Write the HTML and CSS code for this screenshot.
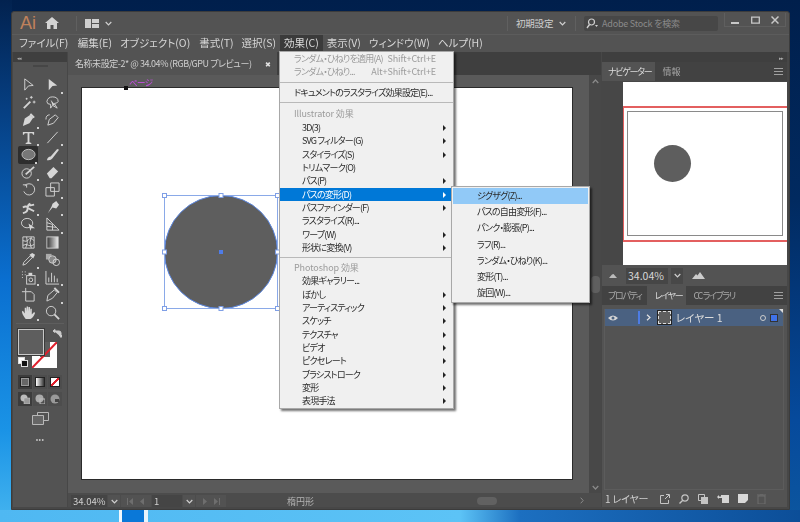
FILE: index.html
```html
<!DOCTYPE html>
<html lang="ja">
<head>
    <meta charset="UTF-8">
    <meta name="viewport" content="width=device-width, initial-scale=1.0">
    <title>Adobe Illustrator - 効果メニュー</title>
    <link rel="stylesheet" href="styles.css">
</head>
<body>

<div class="window">

    <!-- Title bar -->
    <div class="titlebar">
        <span class="ai-logo">Ai</span>
        <svg class="home-icon" width="14" height="12" viewBox="0 0 14 12"><path d="M7 0 L14 6 H12 V12 H8.5 V8 H5.5 V12 H2 V6 H0 Z" fill="#d4d4d4"/></svg>
        <span class="title-sep"></span>
        <svg width="14" height="9" viewBox="0 0 14 9"><path d="M0 0h6v9H0zM7 0h7v4H7zM7 5h7v4H7z" fill="#cfcfcf"/></svg>
        <svg class="chev" width="7" height="5" viewBox="0 0 7 5"><path d="M.7 1 L3.5 3.8 L6.3 1" fill="none" stroke="#d0d0d0" stroke-width="1.2"/></svg>
        <span class="title-space"></span>
        <span class="title-sep"></span>
        <span class="workspace-name">初期設定</span>
        <svg class="chev" width="7" height="5" viewBox="0 0 7 5"><path d="M.7 1 L3.5 3.8 L6.3 1" fill="none" stroke="#d0d0d0" stroke-width="1.2"/></svg>
        <span class="title-sep"></span>
        <div class="stock-search">
            <svg width="12" height="11" viewBox="0 0 12 11"><circle cx="5.5" cy="4" r="3" fill="none" stroke="#cfcfcf" stroke-width="1.2"/><path d="M3.5 6.5 L1 10" stroke="#cfcfcf" stroke-width="1.4"/><path d="M9 7h3l-1.500 2z" fill="#cfcfcf"/></svg>
            <span>Adobe Stock を検索</span>
        </div>
        <div class="win-buttons">
            <span class="win-btn"><svg width="8" height="8" viewBox="0 0 8 8"><path d="M0 6h8v2H0z" fill="#c8c8c8"/></svg></span>
            <span class="win-btn"><svg width="9" height="8" viewBox="0 0 9 8"><path d="M.7 1.200h7.600v6H.7z" fill="none" stroke="#c8c8c8" stroke-width="1.300"/></svg></span>
            <span class="win-btn"><svg width="8" height="8" viewBox="0 0 8 8"><path d="M.5.500 L7.500 7.500 M7.500.500 L.5 7.500" stroke="#c8c8c8" stroke-width="1.500"/></svg></span>
        </div>
    </div>

    <!-- Menu bar -->
    <div class="menubar">
        <span class="menubar-item">ファイル(F)</span>
        <span class="menubar-item">編集(E)</span>
        <span class="menubar-item">オブジェクト(O)</span>
        <span class="menubar-item">書式(T)</span>
        <span class="menubar-item">選択(S)</span>
        <span class="menubar-item active">効果(C)</span>
        <span class="menubar-item">表示(V)</span>
        <span class="menubar-item">ウィンドウ(W)</span>
        <span class="menubar-item">ヘルプ(H)</span>
    </div>

    <div class="workspace">

        <!-- Tools -->
        <div class="toolbar">
            <div class="strip"><span class="strip-arrows">◂◂</span></div>
            <div class="grip"></div>
            <div class="tool-grid">
                <span class="tool"><svg viewBox="0 0 16 16"><path d="M4 2 L13 9 L8 9.500 L4 14 Z" class="ln"/></svg></span>
                <span class="tool more"><svg viewBox="0 0 16 16"><path d="M4 2 L13 9 L8 9.500 L4 14 Z" class="fl"/></svg></span>
                <span class="tool"><svg viewBox="0 0 16 16"><path d="M3 14 L10 7" class="ln w2"/><path d="M11 1v3M9.500 2.500h3M14 6v3M12.500 7.500h3M6 3v2M5 4h2" class="ln"/></svg></span>
                <span class="tool"><svg viewBox="0 0 16 16"><path d="M2 7 Q3 2 8 2 Q14 2 14 7 Q13 9 10 9 L13 14 L8 11 L6 14 L6 10 Q2 10 2 7Z" class="ln"/><path d="M6 5 L11 11 L8 11 Z" class="fl"/></svg></span>
                <span class="tool more"><svg viewBox="0 0 16 16"><path d="M2 15 L4 7 L10 3 L13 6 L9 12 Z" class="fl"/><path d="M10 2 L14 6" class="ln w2"/></svg></span>
                <span class="tool"><svg viewBox="0 0 16 16"><path d="M3 14 L4.500 8 L11 3 L14 6 L9 12 Z" class="ln"/><path d="M1 8 Q1 3 5 3" class="ln"/></svg></span>
                <span class="tool more"><svg viewBox="0 0 16 16"><path d="M2 2h12v3h-1l-1-1.500H9V13l2 .8V15H5v-1.200l2-.8V3.500H4L3 5H2z" class="fl"/></svg></span>
                <span class="tool more"><svg viewBox="0 0 16 16"><path d="M2.500 14 L13.500 2" class="ln"/></svg></span>
                <span class="tool selected more"><svg viewBox="0 0 16 16"><ellipse cx="8" cy="8" rx="7" ry="5.500" fill="#777" stroke="#bdbdbd"/></svg></span>
                <span class="tool more"><svg viewBox="0 0 16 16"><path d="M2 14 Q3 10 6 10 L13 2 L15 3 L8 12 Q6 15 2 14Z" class="fl"/></svg></span>
                <span class="tool more"><svg viewBox="0 0 16 16"><ellipse cx="6" cy="9" rx="5" ry="5" class="ln"/><path d="M5 10 L14 2" class="ln w2"/></svg></span>
                <span class="tool more"><svg viewBox="0 0 16 16"><path d="M2 9 L9 2 L14 7 L7 14 H5 Z" class="fl"/></svg></span>
                <span class="tool"><svg viewBox="0 0 16 16"><path d="M4 4 A6 6 0 1 1 3 10" class="ln"/><path d="M2 3h4v3" class="ln"/></svg></span>
                <span class="tool more"><svg viewBox="0 0 16 16"><path d="M1 6h9v9H1z M6 1h9v9H6z" class="ln"/></svg></span>
                <span class="tool more"><svg viewBox="0 0 16 16"><path d="M2 14 Q7 13 7 9 Q7 5 10 4 M2 8 Q5 6 8 8 M8 9 L14 12 M9 6 L14 5" class="ln w2"/></svg></span>
                <span class="tool more"><svg viewBox="0 0 16 16"><path d="M8 4 L12 1 L15 5 L12 9 L8 8 L3 14 L7 7 Z" class="fl"/></svg></span>
                <span class="tool"><svg viewBox="0 0 16 16"><ellipse cx="6.500" cy="6.500" rx="6" ry="5" class="ln"/><path d="M8 7 L15 12 L11 12 L10 15 Z" class="fl"/></svg></span>
                <span class="tool more"><svg viewBox="0 0 16 16"><path d="M2 1v13h13 L2 1 M2 6 L8 8 V14 M2 10 L12 11" class="ln"/></svg></span>
                <span class="tool"><svg viewBox="0 0 16 16"><path d="M2 2h12v12H2z M2 6 Q6 8 8 5 Q10 2 14 6 M2 11 Q6 9 8 11 Q10 13 14 10 M6 2 Q8 8 5 14 M11 2 Q8 8 11 14" class="ln"/></svg></span>
                <span class="tool"><svg viewBox="0 0 16 16"><defs><linearGradient id="toolgrad"><stop offset="0" stop-color="#333"/><stop offset="1" stop-color="#eee"/></linearGradient></defs><rect x="2" y="2" width="12" height="12" fill="url(#toolgrad)" stroke="#ccc"/></svg></span>
                <span class="tool more"><svg viewBox="0 0 16 16"><path d="M2 14 L3 11 L10 4 L12 6 L5 13 Z" class="ln"/><path d="M9 3 L12 1 L15 3 L13 7 Z" class="fl"/></svg></span>
                <span class="tool"><svg viewBox="0 0 16 16"><rect x="1" y="2" width="6" height="6" fill="#aaa"/><circle cx="8" cy="8" r="4" fill="#888" stroke="#ccc"/><circle cx="12" cy="11" r="3.500" class="ln"/></svg></span>
                <span class="tool more"><svg viewBox="0 0 16 16"><path d="M1 2h1M4 2h1M1 5h1M4 5h1M1 8h1" class="ln"/><rect x="6" y="6" width="9" height="9" class="ln"/><rect x="8" y="3" width="4" height="3" class="fl"/><circle cx="10.500" cy="10.500" r="2" class="ln"/></svg></span>
                <span class="tool more"><svg viewBox="0 0 16 16"><path d="M1 1v14h14M4 13V8M7 13V3M10 13V6M13 13V9" class="ln"/></svg></span>
                <span class="tool"><svg viewBox="0 0 16 16"><path d="M5 1v4M1 5h4 M5 5 H11 L14 8 V15 H5 Z" class="ln"/></svg></span>
                <span class="tool more"><svg viewBox="0 0 16 16"><path d="M2 15 L3 9 L10 3 L13 6 L8 12 Z" class="ln"/><path d="M10 1 L15 6" class="ln w2"/></svg></span>
                <span class="tool more"><svg viewBox="0 0 16 16"><path d="M5 15 Q1 10 1 7 L2 6 L4 9 V3 L5.500 3 L6 7 V1.500 H7.500 L8 7 V2 H9.500 L10 8 V4 H11.500 V10 L14 7.500 L15 8.500 Q13 14 10 15 Z" class="fl"/></svg></span>
                <span class="tool"><svg viewBox="0 0 16 16"><circle cx="6.500" cy="6.500" r="5" class="ln"/><path d="M10 10 L15 15" class="ln w2"/></svg></span>
            </div>
            <div class="tool-rule"></div>

            <div class="color-well">
                <svg class="stroke-box" width="25" height="26" viewBox="0 0 25 26"><rect width="25" height="26" fill="#fff"/><rect x="8" width="10" height="15" fill="#5e5e5e"/><path d="M0 26 L25 0" stroke="#e0202c" stroke-width="2"/></svg>
                <div class="fill-box"></div>
                <svg class="swap-arrow" width="9" height="9" viewBox="0 0 9 9"><path d="M1 2 H6 Q8 2 8 4 V8 M0 2 L2 0.500 V3.500Z M6.500 6.500 L9 6.500 L8 8.500Z" fill="#ccc" stroke="#ccc"/></svg>
                <div class="mini-default"><span class="mini-back"></span><span class="mini-front"></span></div>
            </div>

            <div class="tool-row">
                <span class="mode-btn on"><span class="swatch-flat"></span></span>
                <span class="mode-btn"><span class="swatch-grad"></span></span>
                <span class="mode-btn"><span class="swatch-none"></span></span>
            </div>
            <div class="tool-row draw-row">
                <span class="mode-btn on"><svg width="10" height="10" viewBox="0 0 10 10"><circle cx="4" cy="4" r="3.500" fill="#bbb"/><rect x="4" y="4" width="6" height="6" fill="#999" stroke="#ccc" stroke-width=".5"/></svg></span>
                <span class="mode-btn"><svg width="10" height="10" viewBox="0 0 10 10"><circle cx="4.500" cy="4.500" r="4" fill="#aaa"/><rect x="5" y="5" width="5" height="5" fill="none" stroke="#bbb"/></svg></span>
                <span class="mode-btn"><svg width="10" height="10" viewBox="0 0 10 10"><circle cx="5" cy="5" r="4.500" fill="#999"/><path d="M5 5h4v3H5z" fill="#444"/></svg></span>
            </div>
            <div class="screen-mode">
                <svg width="17" height="13" viewBox="0 0 17 13"><path d="M5.500 3.500V.500h11v8h-5" fill="none" stroke="#b8b8b8"/><path d="M.5 3.500h11v9H.5z" fill="#666" stroke="#b8b8b8"/></svg>
            </div>
            <div class="more-tools">•••</div>
        </div>

        <!-- Document -->
        <div class="document">
            <div class="doc-tabs">
                <div class="doc-tab">
                    <span>名称未設定-2* @ 34.04% (RGB/GPU プレビュー)</span>
                    <span class="doc-close">✖</span>
                </div>
            </div>
            <div class="doc-body">
                <div class="canvas">
                    <div class="artboard">
                        <span class="page-label">ページ</span>
                        <span class="page-mark"></span>
                        <svg class="selection" width="124" height="124" viewBox="0 0 124 124">
                            <circle cx="62" cy="62" r="56.500" fill="#5e5e5e" stroke="#5c87df"/>
                            <rect x="5.500" y="5.500" width="113" height="113" fill="none" stroke="#8aa9e8"/>
                            <g fill="#fff" stroke="#7f9fe6">
                                <rect x="3.500" y="3.500" width="4" height="4"/>
                                <rect x="60" y="3.500" width="4" height="4"/>
                                <rect x="116.500" y="3.500" width="4" height="4"/>
                                <rect x="3.500" y="60" width="4" height="4"/>
                                <rect x="116.500" y="60" width="4" height="4"/>
                                <rect x="3.500" y="116.500" width="4" height="4"/>
                                <rect x="60" y="116.500" width="4" height="4"/>
                                <rect x="116.500" y="116.500" width="4" height="4"/>
                            </g>
                            <rect x="60" y="60" width="4" height="4" fill="#4f7ce8"/>
                        </svg>
                    </div>
                </div>
                <div class="v-scroll">
                    <svg width="7" height="5" viewBox="0 0 7 5"><path d="M.7 4 L3.500 1 L6.300 4" fill="none" stroke="#8a8a8a" stroke-width="1.200"/></svg>
                    <span class="v-thumb"></span>
                    <svg width="7" height="5" viewBox="0 0 7 5"><path d="M.7 1 L3.500 4 L6.300 1" fill="none" stroke="#8a8a8a" stroke-width="1.200"/></svg>
                </div>
            </div>
            <div class="statusbar">
                <span class="status-field zoom-field">34.04%</span>
                <span class="status-btn"><svg width="7" height="5" viewBox="0 0 7 5"><path d="M.7 1 L3.500 3.800 L6.300 1" fill="none" stroke="#d0d0d0" stroke-width="1.200"/></svg></span>
                <span class="status-btn wide"><svg width="18" height="7" viewBox="0 0 18 7"><path d="M0 0h1v7H0zM6 0v7L2 3.500zM17 0v7L13 3.500z" fill="#6e6e6e"/></svg></span>
                <span class="status-field page-field">1</span>
                <span class="status-btn"><svg width="7" height="5" viewBox="0 0 7 5"><path d="M.7 1 L3.500 3.800 L6.300 1" fill="none" stroke="#d0d0d0" stroke-width="1.200"/></svg></span>
                <span class="status-btn wide"><svg width="18" height="7" viewBox="0 0 18 7"><path d="M1 0v7L5 3.500zM12 0v7L16 3.500zM17 0h1v7h-1z" fill="#6e6e6e"/></svg></span>
                <span class="status-label">楕円形</span>
                <span class="h-thumb"></span>
                <svg class="status-arrow" width="4" height="7" viewBox="0 0 4 7"><path d="M.7 .7 L3.200 3.500 L.7 6.300" fill="none" stroke="#8a8a8a"/></svg>
            </div>
        </div>

        <!-- Right panels -->
        <div class="panels">
            <div class="strip strip-right"><span class="strip-arrows">▸▸</span></div>

            <div class="panel-tabs top-tabs">
                <span class="panel-tab active">ナビゲーター</span>
                <span class="panel-tab">情報</span>
                <span class="panel-menu"></span>
            </div>
            <div class="navigator">
                <div class="nav-view">
                    <div class="nav-red">
                        <div class="nav-page"><span class="nav-circle"></span></div>
                    </div>
                </div>
            </div>
            <div class="nav-zoom">
                <svg width="8" height="5" viewBox="0 0 8 5"><path d="M0 5 L3 1.500 L4.500 1 L8 5Z" fill="#bbb"/></svg>
                <span class="nav-field">34.04%</span>
                <span class="nav-chev"><svg width="7" height="5" viewBox="0 0 7 5"><path d="M.7 1 L3.500 3.800 L6.300 1" fill="none" stroke="#d0d0d0" stroke-width="1.200"/></svg></span>
                <svg width="13" height="7" viewBox="0 0 13 7"><path d="M0 7 L4 2 L5.500 3.500 L8 0 L13 7Z" fill="#ccc"/></svg>
            </div>

            <div class="panel-tabs layer-tabs">
                <span class="panel-tab">プロパティ</span>
                <span class="panel-tab active">レイヤー</span>
                <span class="panel-tab">CC ライブラリ</span>
                <span class="panel-menu"></span>
            </div>
            <div class="layers">
                <div class="layer-row">
                    <svg class="eye" width="10" height="6" viewBox="0 0 10 6"><path d="M0 3 Q5 -2 10 3 Q5 8 0 3Z" fill="#d6d6d6"/><circle cx="5" cy="3" r="1.500" fill="#4a6281"/></svg>
                    <span class="layer-color"></span>
                    <svg class="layer-chev" width="5" height="7" viewBox="0 0 5 7"><path d="M1 .7 L4 3.500 L1 6.300" fill="none" stroke="#e2e2e2" stroke-width="1.200"/></svg>
                    <span class="layer-thumb"></span>
                    <span class="layer-name">レイヤー 1</span>
                    <span class="layer-target"></span>
                    <span class="layer-sel"></span>
                </div>
            </div>
            <div class="panel-foot">
                <span class="foot-count">1 レイヤー</span>
                <svg width="10" height="10" viewBox="0 0 10 10"><path d="M4 1.500H.5v8h8V6M5 5 L9 1M6 .5h3.500V4" fill="none" stroke="#c4c4c4"/></svg>
                <svg width="10" height="10" viewBox="0 0 10 10"><circle cx="6" cy="4" r="3.200" fill="none" stroke="#c4c4c4" stroke-width="1.200"/><path d="M3.800 6.200 L.5 9.500" stroke="#c4c4c4" stroke-width="1.400"/></svg>
                <svg width="10" height="10" viewBox="0 0 10 10"><path d="M.5.500h6v6h-6z" fill="none" stroke="#c4c4c4"/><path d="M3 3h7v7H3z" fill="#c4c4c4"/></svg>
                <svg width="12" height="8" viewBox="0 0 12 8"><path d="M0 2 L2 0 V1.500 H4 V0 H12 V8 H5 V3 H2 V4Z" fill="#d4d4d4"/></svg>
                <svg width="10" height="9" viewBox="0 0 10 9"><path d="M0 0h10v6L7 9H0z" fill="#d8d8d8"/></svg>
                <svg class="trash" width="9" height="10" viewBox="0 0 9 10"><path d="M1 2h7v8H1zM0 1h9M3 0h3" fill="none" stroke="#6e6e6e"/></svg>
            </div>
        </div>
    </div>
</div>

<!-- Effect menu -->
<div class="menu effect-menu">
    <div class="row flush off"><span>ランダム・ひねりを適用(A)</span><span class="key">Shift+Ctrl+E</span></div>
    <div class="row flush off"><span>ランダム・ひねり...</span><span class="key">Alt+Shift+Ctrl+E</span></div>
    <div class="sep"></div>
    <div class="row flush"><span>ドキュメントのラスタライズ効果設定(E)...</span></div>
    <div class="sep"></div>
    <div class="row flush off head first-head"><span>Illustrator 効果</span></div>
    <div class="row sub"><span>3D(3)</span></div>
    <div class="row sub"><span>SVG フィルター(G)</span></div>
    <div class="row sub"><span>スタイライズ(S)</span></div>
    <div class="row"><span>トリムマーク(O)</span></div>
    <div class="row sub"><span>パス(P)</span></div>
    <div class="row sub hot"><span>パスの変形(D)</span></div>
    <div class="row sub"><span>パスファインダー(F)</span></div>
    <div class="row"><span>ラスタライズ(R)...</span></div>
    <div class="row sub"><span>ワープ(W)</span></div>
    <div class="row sub"><span>形状に変換(V)</span></div>
    <div class="sep"></div>
    <div class="row flush off head"><span>Photoshop 効果</span></div>
    <div class="row"><span>効果ギャラリー...</span></div>
    <div class="row sub"><span>ぼかし</span></div>
    <div class="row sub"><span>アーティスティック</span></div>
    <div class="row sub"><span>スケッチ</span></div>
    <div class="row sub"><span>テクスチャ</span></div>
    <div class="row sub"><span>ビデオ</span></div>
    <div class="row sub"><span>ピクセレート</span></div>
    <div class="row sub"><span>ブラシストローク</span></div>
    <div class="row sub"><span>変形</span></div>
    <div class="row sub"><span>表現手法</span></div>
</div>

<!-- Path distort submenu -->
<div class="menu distort-menu">
    <div class="sub-row hot"><span>ジグザグ(Z)...</span></div>
    <div class="sub-row"><span>パスの自由変形(F)...</span></div>
    <div class="sub-row"><span>パンク・膨張(P)...</span></div>
    <div class="sub-row"><span>ラフ(R)...</span></div>
    <div class="sub-row"><span>ランダム・ひねり(K)...</span></div>
    <div class="sub-row"><span>変形(T)...</span></div>
    <div class="sub-row"><span>旋回(W)...</span></div>
</div>

</body>
</html>
```

FILE: styles.css
```css
* {
    box-sizing: border-box;
}

html, body {
    height: 100%;
}

/* Desktop wallpaper */
body {
    margin: 0;
    overflow: hidden;
    position: relative;
    font-family: "Noto Sans CJK JP", "Noto Sans", sans-serif;
    font-feature-settings: "palt";
    background:
        linear-gradient(90deg, transparent 119px, #f2f8fd 119px, #f2f8fd 122px, #0a78d8 122px, #0a78d8 144px, #e8f4fc 144px, #e8f4fc 148px, transparent 148px) 0 510px / 100% 12px no-repeat,
        linear-gradient(90deg, #4fb8f2 0, #5cc3f6 460px, #1c6fc0 520px, #0c4e98 800px) 0 510px / 100% 12px no-repeat,
        linear-gradient(180deg, #02224f 0, #063f82 110px, #0a6fd0 280px, #1a93e6 430px, #3fb0ee 510px) 0 0 / 12px 100% no-repeat,
        linear-gradient(180deg, #001f4c 0, #012a60 200px, #064a9c 420px, #0c569f 522px);
}

/* Main window */
.window {
    position: absolute;
    left: 11px;
    top: 11px;
    width: 779px;
    height: 499px;
    background: #535353;
    border: 1px solid #3c3c3c;
    border-radius: 3px 3px 0 0;
    color: #d8d8d8;
    display: flex;
    flex-direction: column;
    font-size: 10px;
    filter: blur(.35px);
}

/* Title bar */
.titlebar {
    height: 22px;
    flex: none;
    display: flex;
    align-items: center;
    padding-left: 8px;
}

.ai-logo {
    color: #c0825c;
    font-family: "Liberation Sans", sans-serif;
    font-size: 18px;
    width: 25px;
}

.home-icon {
    margin-right: 17px;
    flex: none;
}

.title-sep {
    width: 1px;
    height: 15px;
    background: #606060;
    margin-right: 8px;
    flex: none;
}

.chev {
    margin-left: 6px;
    flex: none;
}

.title-space {
    flex: 1;
}

.workspace-name {
    color: #cfcfcf;
    width: 37px;
    white-space: nowrap;
    flex: none;
    font-size: 9.5px;
    letter-spacing: -.2px;
}

.workspace-name + .chev {
    margin-right: 9px;
}

.stock-search {
    width: 134px;
    height: 15px;
    flex: none;
    background: #474747;
    border-radius: 2px;
    display: flex;
    align-items: center;
    gap: 4px;
    padding-left: 2px;
    color: #8a8a8a;
    font-size: 9px;
    letter-spacing: -.2px;
}

.win-buttons {
    display: flex;
    flex: none;
    margin: -6px 3px 0 6px;
    height: 14px;
    border: 1px solid #5f5f5f;
    border-top: 0;
}

.win-btn {
    width: 20px;
    display: flex;
    align-items: center;
    justify-content: center;
}

/* Menu bar */
.menubar {
    height: 18px;
    flex: none;
    display: flex;
    align-items: center;
    padding-left: 3px;
    border-top: 1px solid #5c5c5c;
    font-size: 10.5px;
    color: #d6d6d6;
}

.menubar-item {
    padding: 0 4px;
    height: 17px;
    line-height: 16px;
    white-space: nowrap;
}

.menubar-item:first-child {
    margin-right: 1.5px;
}

.menubar-item:nth-child(3) {
    margin-right: 1px;
}

.menubar-item.active {
    background: #3b3b3b;
    color: #dcdcdc;
}

/* Three columns under the menu bar */
.workspace {
    flex: 1;
    min-height: 0;
    display: flex;
    padding: 0 2px 2px 1px;
    gap: 1px;
    background: #474747;
}

/* Tools */
.toolbar {
    width: 54px;
    flex: none;
    background: #535353;
    display: flex;
    flex-direction: column;
    align-items: center;
}

.strip {
    align-self: stretch;
    height: 10px;
    background: #3f3f3f;
    display: flex;
    align-items: center;
    padding: 0 4px;
}

.strip-right {
    justify-content: flex-end;
}

.strip-arrows {
    font-size: 5px;
    line-height: 1;
    color: #aaa;
    letter-spacing: -1px;
}

.grip {
    width: 15px;
    height: 2px;
    background: #464646;
    margin: 3px 0 9px;
    flex: none;
}

.tool-grid {
    display: grid;
    grid-template-columns: 24px 24px;
    grid-auto-rows: 17.5px;
    flex: none;
}

.tool {
    display: flex;
    align-items: center;
    justify-content: center;
    position: relative;
}

.tool svg {
    width: 15px;
    height: 15px;
}

.tool.selected {
    background: #2e2e2e;
    border-radius: 2px;
    width: 20px;
    margin-left: 2px;
}

.tool.more::after {
    content: "";
    position: absolute;
    right: 1px;
    bottom: 0;
    width: 2px;
    height: 2px;
    background: #cfcfcf;
}

.ln {
    fill: none;
    stroke: #d4d4d4;
    stroke-width: 1;
}

.w2 {
    stroke-width: 2;
}

.fl {
    fill: #d6d6d6;
}

.tool-rule {
    width: 48px;
    height: 1px;
    background: #5e5e5e;
    margin-top: 2px;
    flex: none;
}

/* Fill and stroke boxes */
.color-well {
    position: relative;
    width: 44px;
    height: 44px;
    margin-top: 5px;
    flex: none;
}

.fill-box {
    position: absolute;
    left: 0;
    top: 0;
    width: 26px;
    height: 26px;
    background: #5e5e5e;
    border: 1px solid #c8c8c8;
    box-shadow: 0 0 0 1px #3a3a3a;
}

.stroke-box {
    position: absolute;
    left: 14px;
    top: 13px;
}

.swap-arrow {
    position: absolute;
    right: 0;
    top: 0;
}

.mini-default {
    position: absolute;
    left: 0;
    top: 28px;
    width: 10px;
    height: 10px;
}

.mini-back,
.mini-front {
    position: absolute;
    width: 7px;
    height: 7px;
    border: 1px solid #ddd;
    background: #111;
}

.mini-back {
    left: 0;
    top: 0;
    background: #fff;
}

.mini-front {
    left: 3px;
    top: 3px;
}

.tool-row {
    display: flex;
    gap: 1px;
    margin-top: 2px;
    flex: none;
}

.draw-row {
    margin-top: 3px;
}

.mode-btn {
    width: 14px;
    height: 14px;
    display: flex;
    align-items: center;
    justify-content: center;
    background: #4d4d4d;
}

.mode-btn.on {
    background: #3c3c3c;
}

.swatch-flat,
.swatch-grad,
.swatch-none {
    width: 10px;
    height: 10px;
    border: 1px solid #222;
}

.swatch-flat {
    background: #666;
    outline: 1px solid #999;
    outline-offset: -2px;
}

.swatch-grad {
    background: linear-gradient(90deg, #fff, #333);
}

.swatch-none {
    background: linear-gradient(135deg, #fff 38%, #e0202c 38%, #e0202c 62%, #fff 62%);
}

.screen-mode {
    margin-top: 6px;
    line-height: 0;
    flex: none;
}

.more-tools {
    margin-top: 9px;
    color: #c4c4c4;
    font-size: 7px;
    letter-spacing: .5px;
    flex: none;
}

/* Document */
.document {
    flex: 1;
    min-width: 0;
    display: flex;
    flex-direction: column;
}

.doc-tabs {
    height: 23px;
    flex: none;
    background: #3f3f3f;
    display: flex;
}

.doc-tab {
    width: 209px;
    background: #535353;
    display: flex;
    align-items: center;
    justify-content: space-between;
    padding: 0 6px 0 7px;
    color: #cfcfcf;
    font-size: 9px;
    letter-spacing: -.45px;
    white-space: nowrap;
}

.doc-close {
    font-size: 7px;
    color: #e4e4e4;
}

.doc-body {
    flex: 1;
    min-height: 0;
    display: flex;
}

.canvas {
    flex: 1;
    background: #5a5a5a;
    padding: 12px 16px 13px 13px;
    display: flex;
}

.artboard {
    flex: 1;
    background: #fff;
    border: 1px solid #2a2a2a;
    position: relative;
}

.page-label {
    position: absolute;
    left: 47px;
    top: -11px;
    color: #b84fd0;
    font-size: 8.5px;
    font-weight: 500;
    line-height: 10px;
    letter-spacing: -.5px;
}

.page-mark {
    position: absolute;
    left: 42px;
    top: -2px;
    width: 4px;
    height: 4px;
    background: #111;
}

.selection {
    position: absolute;
    left: 77px;
    top: 102px;
}

.v-scroll {
    width: 12px;
    flex: none;
    background: #484848;
    display: flex;
    flex-direction: column;
    align-items: center;
    padding: 4px 0 3px;
    position: relative;
    justify-content: space-between;
}

.v-thumb {
    position: absolute;
    top: 201px;
    left: 2px;
    width: 9px;
    height: 17px;
    background: #5f5f5f;
    border-radius: 4px;
}

.statusbar {
    height: 14px;
    flex: none;
    background: #4c4c4c;
    display: flex;
    align-items: stretch;
    padding: 2px 0 0 3px;
    gap: 1px;
    font-size: 9.5px;
    line-height: 13px;
    position: relative;
}

.status-field {
    background: #454545;
    color: #cfcfcf;
    padding-left: 2px;
}

.zoom-field {
    width: 36px;
}

.page-field {
    width: 30px;
}

.status-btn {
    width: 12px;
    background: #525252;
    display: flex;
    align-items: center;
    justify-content: center;
}

.status-btn.wide {
    width: 30px;
}

.status-label {
    margin-left: 60px;
    color: #b4b4b4;
    font-size: 9px;
    width: 150px;
}

.h-thumb {
    width: 20px;
    height: 8px;
    margin: 2px 0 0 39px;
    background: #616161;
    border-radius: 4px;
}

.status-arrow {
    position: absolute;
    right: 17px;
    top: 4px;
}

/* Right panels */
.panels {
    width: 185px;
    flex: none;
    background: #535353;
    display: flex;
    flex-direction: column;
}

.panel-tabs {
    height: 19px;
    flex: none;
    background: #424242;
    display: flex;
    align-items: stretch;
    font-size: 9px;
    letter-spacing: -1.3px;
    color: #a8a8a8;
}

.panel-tab {
    line-height: 19px;
    white-space: nowrap;
}

.top-tabs .panel-tab:nth-child(1) {
    padding: 0 4px 0 6px;
}

.top-tabs .panel-tab:nth-child(2) {
    padding-left: 7px;
    letter-spacing: 0;
}

.layer-tabs .panel-tab:nth-child(1) {
    padding: 0 5px 0 6px;
}

.layer-tabs .panel-tab:nth-child(2) {
    padding: 0 4px 0 8px;
}

.layer-tabs .panel-tab:nth-child(3) {
    padding-left: 7px;
}

.panel-tab.active {
    background: #535353;
    color: #dcdcdc;
}

.panel-menu {
    margin: 6px 4px 0 auto;
    width: 9px;
    height: 7px;
    border-top: 1px solid #a0a0a0;
    border-bottom: 1px solid #a0a0a0;
    background: linear-gradient(#a0a0a0, #a0a0a0) center / 100% 1px no-repeat;
}

.navigator {
    height: 184px;
    flex: none;
    background: #474747;
    padding: 1px 0 0 21px;
    display: flex;
}

.nav-view {
    flex: 1;
    background: #fff;
    padding-top: 24px;
}

.nav-red {
    height: 136px;
    border-top: 2px solid #e35f5f;
    border-bottom: 2px solid #e35f5f;
    border-left: 1px solid #e35f5f;
    padding: 3px 4px 4px 3px;
    display: flex;
}

.nav-page {
    flex: 1;
    border: 1px solid #8a8a8a;
    position: relative;
}

.nav-circle {
    position: absolute;
    left: 26px;
    top: 33px;
    width: 37px;
    height: 37px;
    border-radius: 50%;
    background: #5e5e5e;
}

.nav-zoom {
    height: 21px;
    flex: none;
    background: #535353;
    display: flex;
    align-items: center;
    padding-left: 7px;
    gap: 3px;
}

.nav-field {
    margin-left: 6px;
    width: 42px;
    height: 16px;
    background: #464646;
    font-size: 10.5px;
    line-height: 16px;
    padding-left: 2px;
    color: #d8d8d8;
}

.nav-chev {
    width: 12px;
    height: 16px;
    background: #484848;
    display: flex;
    align-items: center;
    justify-content: center;
    margin-right: 6px;
}

.layers {
    flex: 1;
    min-height: 0;
    margin: 4px 3px 0 2px;
    border: 1px solid #5c5c5c;
    border-top: 0;
}

.layer-row {
    height: 17px;
    background: #4a6181;
    display: flex;
    align-items: center;
    position: relative;
    color: #dcdcdc;
    font-size: 10.5px;
}

.layer-row::after {
    content: "";
    position: absolute;
    right: 0;
    top: 0;
    border-top: 4px solid #ddd;
    border-left: 4px solid transparent;
}

.eye {
    margin-left: 3px;
}

.layer-color {
    width: 2px;
    height: 13px;
    background: #4d7ce4;
    margin-left: 20px;
}

.layer-chev {
    margin-left: 6px;
}

.layer-thumb {
    width: 13px;
    height: 13px;
    margin-left: 7px;
    background: #5e5e5e;
    border: 1px dashed #ddd;
    outline: 1px solid #222;
}

.layer-name {
    margin-left: 5px;
    white-space: nowrap;
}

.layer-target {
    width: 6px;
    height: 6px;
    border: 1px solid #ccc;
    border-radius: 50%;
    margin-left: auto;
}

.layer-sel {
    width: 6px;
    height: 6px;
    background: #3f72e8;
    outline: 1px solid #333;
    margin: 0 6px 0 5px;
}

.panel-foot {
    height: 17px;
    flex: none;
    display: flex;
    align-items: center;
    padding-left: 3px;
    gap: 9px;
    color: #cfcfcf;
    font-size: 10px;
}

.foot-count {
    width: 46px;
    white-space: nowrap;
    letter-spacing: -.2px;
}

/* Drop-down menus */
.menu {
    position: absolute;
    background: #f0f0f0;
    border: 1px solid #a8a8a8;
    box-shadow: 2px 2px 2px rgba(0, 0, 0, .55);
    color: #2b2b2b;
    font-size: 9px;
    letter-spacing: -.8px;
    filter: blur(.3px);
}

.effect-menu {
    left: 279px;
    top: 51px;
    width: 175px;
    height: 358px;
}

.distort-menu {
    left: 451px;
    top: 186px;
    width: 139px;
    height: 117px;
    padding: 1px;
}

.row {
    height: 13.3px;
    line-height: 13.3px;
    padding: 0 8px 0 22px;
    display: flex;
    justify-content: space-between;
    position: relative;
    white-space: nowrap;
}

.row.flush {
    padding-left: 14px;
    padding-right: 17px;
}

.row.off {
    color: #9b9b9b;
}

.row.head {
    letter-spacing: -.1px;
}

.row.first-head {
    height: 14.3px;
    margin-top: 1px;
}

.key {
    letter-spacing: -.1px;
}

.row.sub::after {
    content: "";
    position: absolute;
    right: 7px;
    top: 4px;
    border-left: 3px solid #222;
    border-top: 3px solid transparent;
    border-bottom: 3px solid transparent;
}

.row.hot {
    background: #0078d7;
    color: #fff;
}

.row.hot::after {
    border-left-color: #fff;
}

.sep {
    height: 7px;
    padding-top: 3px;
}

.sep::after {
    content: "";
    display: block;
    height: 1px;
    background: #b9b9b9;
}

.sub-row {
    height: 16.2px;
    line-height: 16.2px;
    padding-left: 24px;
    white-space: nowrap;
}

.sub-row.hot {
    background: #91c9f7;
}
```
